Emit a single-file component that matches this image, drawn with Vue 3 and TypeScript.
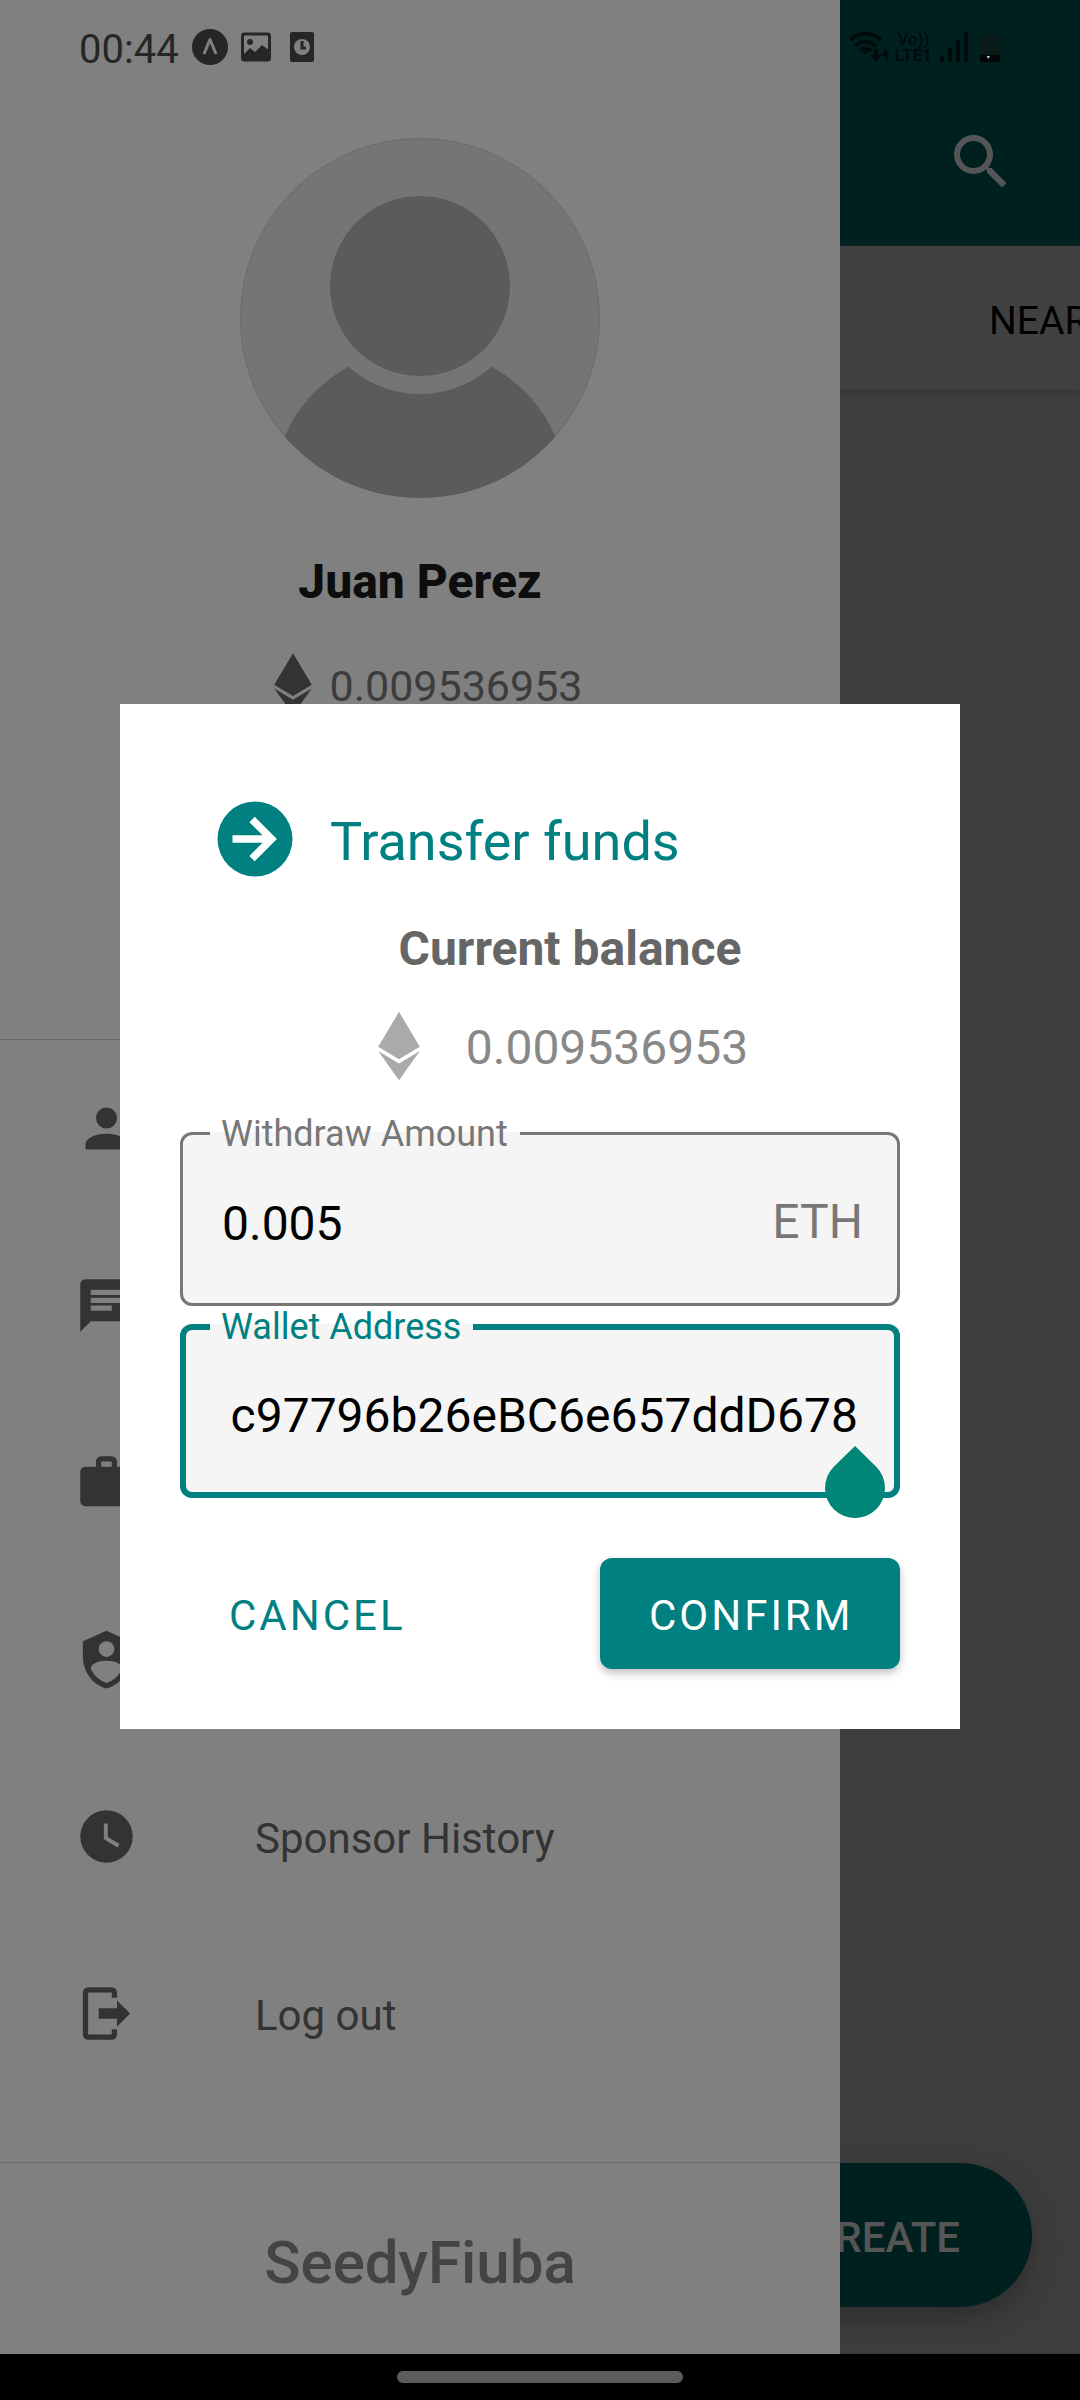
<script setup lang="ts">
import { ref } from 'vue'

interface MenuItem {
  icon: string
  path: string
  label?: string
}

const balance = '0.009536953'
const amount = ref('0.005')
const wallet = ref('c97796b26eBC6e657ddD678')

const ethereum =
  'M12,1.75L5.75,12.25L12,16L18.25,12.25L12,1.75M5.75,13.5L12,22.25L18.25,13.5L12,17.25L5.75,13.5Z'

const menu: MenuItem[] = [
  {
    icon: 'account',
    path: 'M12,4A4,4 0 0,1 16,8A4,4 0 0,1 12,12A4,4 0 0,1 8,8A4,4 0 0,1 12,4M12,14C16.42,14 20,15.79 20,18V20H4V18C4,15.79 7.58,14 12,14Z',
  },
  {
    icon: 'message',
    path: 'M20,2H4A2,2 0 0,0 2,4V22L6,18H20A2,2 0 0,0 22,16V4A2,2 0 0,0 20,2M6,6H18V8H6V6M6,9H18V11H6V9M6,12H14V14H6V12Z',
  },
  {
    icon: 'briefcase',
    path: 'M10,2H14A2,2 0 0,1 16,4V6H20A2,2 0 0,1 22,8V19A2,2 0 0,1 20,21H4C2.89,21 2,20.1 2,19V8C2,6.89 2.89,6 4,6H8V4C8,2.89 8.89,2 10,2M14,6V4H10V6H14Z',
  },
  {
    icon: 'shield',
    path: 'M12,1L3,5V11C3,16.55 6.84,21.74 12,23C17.16,21.74 21,16.55 21,11V5L12,1M12,5A3,3 0 0,1 15,8A3,3 0 0,1 12,11A3,3 0 0,1 9,8A3,3 0 0,1 12,5M17.13,17C15.92,18.85 14.11,20.24 12,20.92C9.89,20.24 8.08,18.85 6.87,17C6.53,16.5 6.24,16 6,15.47C6,13.82 8.71,12.47 12,12.47C15.29,12.47 18,13.79 18,15.47C17.76,16 17.47,16.5 17.13,17Z',
  },
  {
    icon: 'clock',
    label: 'Sponsor History',
    path: 'M12,2A10,10 0 0,0 2,12A10,10 0 0,0 12,22A10,10 0 0,0 22,12A10,10 0 0,0 12,2M16.2,16.2L11,13V7H12.5V12.2L17,14.9L16.2,16.2Z',
  },
  {
    icon: 'logout',
    label: 'Log out',
    path: 'M9,10H16V7L21,12L16,17V14H9V10M5,2H14A2,2 0 0,1 16,4V6H14V4H5V20H14V18H16V20A2,2 0 0,1 14,22H5A2,2 0 0,1 3,20V4A2,2 0 0,1 5,2Z',
  },
]
</script>

<template>
  <div class="screen">
    <div class="stage">
      <main class="home">
        <header class="topbar">
          <button class="icon-button" type="button" aria-label="Search">
            <svg viewBox="0 0 24 24" width="72" height="72">
              <path
                fill="currentColor"
                d="M9.5,3A6.5,6.5 0 0,1 16,9.5C16,11.11 15.41,12.59 14.44,13.73L14.71,14H15.5L20.5,19L19,20.5L14,15.5V14.71L13.73,14.44C12.59,15.41 11.11,16 9.5,16A6.5,6.5 0 0,1 3,9.5A6.5,6.5 0 0,1 9.5,3M9.5,5C7,5 5,7 5,9.5C5,12 7,14 9.5,14C12,14 14,12 14,9.5C14,7 12,5 9.5,5Z"
              />
            </svg>
          </button>
        </header>
        <nav class="tabs"><button class="tab" type="button">NEAR</button></nav>
        <div class="feed">
          <button class="fab" type="button">CREATE</button>
        </div>
      </main>

      <aside class="drawer">
        <section class="profile">
          <svg class="avatar" viewBox="0 0 360 360" width="360" height="360">
            <defs>
              <clipPath id="avatar-clip"><circle cx="180" cy="180" r="180" /></clipPath>
            </defs>
            <g clip-path="url(#avatar-clip)">
              <rect width="360" height="360" fill="#757575" />
              <circle cx="180" cy="358" r="148" fill="#5a5b5c" />
              <circle cx="180" cy="148" r="108" fill="#757575" />
              <circle cx="180" cy="148" r="90" fill="#5a5b5c" />
            </g>
            <circle cx="180" cy="180" r="179.5" fill="none" stroke="#555" stroke-opacity="0.3" />
          </svg>
          <h2 class="name">Juan Perez</h2>
          <p class="funds">
            <svg viewBox="0 0 24 24" width="72" height="72"><path fill="#333" :d="ethereum" /></svg>
            <span>{{ balance }}</span>
          </p>
        </section>
        <nav class="menu">
          <a v-for="item in menu" :key="item.icon" class="item" href="#">
            <svg viewBox="0 0 24 24" width="63" height="63">
              <path fill="currentColor" fill-rule="evenodd" :d="item.path" />
            </svg>
            <span v-if="item.label">{{ item.label }}</span>
          </a>
        </nav>
        <footer class="brand">SeedyFiuba</footer>
      </aside>

      <div class="status">
        <span class="clock">00:44</span>
        <svg class="notices" viewBox="0 0 122 36" width="122" height="36">
          <circle cx="18" cy="18" r="18" fill="#262626" />
          <path d="M12 25 18 10.500 24 25" fill="none" stroke="#808080" stroke-width="3" stroke-linejoin="round" />
          <rect x="50.500" y="5" width="27" height="26" rx="2" fill="none" stroke="#262626" stroke-width="3" />
          <circle cx="58" cy="13" r="3" fill="#262626" />
          <path d="M51 26 58 19 63 23 70 16 78 22V31H51Z" fill="#262626" />
          <rect x="98" y="3" width="24" height="30" rx="2" fill="#262626" />
          <circle cx="110" cy="18" r="8" fill="#808080" />
          <path d="M110 12V19H114" fill="none" stroke="#262626" stroke-width="3" />
        </svg>
        <span class="spacer"></span>
        <svg viewBox="0 0 40 32" width="40" height="32">
          <g fill="none" stroke="#000c0c" stroke-width="4">
            <path d="M1 9Q16-4 32 9" />
            <path d="M6 15Q16 6 27 15" />
            <path d="M11 20Q16 15 22 20" />
          </g>
          <path d="M14 20H19L17 24ZM22 24H25V18H29V24H32L27 31ZM33 25H36V30H39V25H40L37 17 32 25Z" fill="#000c0c" />
        </svg>
        <span class="volte"><span>Vo))</span><span>LTE1</span></span>
        <svg viewBox="0 0 28 32" width="28" height="32">
          <path d="M0 25H4V31H0ZM8 17H12V31H8ZM16 9H20V31H16ZM24 1H28V31H24Z" fill="#000c0c" />
        </svg>
        <svg class="battery" viewBox="0 0 20 32" width="20" height="32">
          <path d="M6 2H14V5H18Q20 5 20 8V25H0V8Q0 5 2 5H6Z" fill="#0a1a19" />
          <path d="M0 24H20V29Q20 31 18 31H2Q0 31 0 29Z" fill="#000606" />
          <path d="M7 25H10L8 28Z" fill="#d8d8d8" />
        </svg>
      </div>

      <div class="overlay">
        <form class="dialog" role="dialog" aria-labelledby="dialog-title" @submit.prevent>
          <div class="heading">
            <svg viewBox="0 0 24 24" width="90" height="90">
              <path
                fill="#008080"
                d="M22,12A10,10 0 0,1 12,22A10,10 0 0,1 2,12A10,10 0 0,1 12,2A10,10 0 0,1 22,12M6,13H14L10.5,16.5L11.92,17.92L17.84,12L11.92,6.08L10.5,7.5L14,11H6V13Z"
              />
            </svg>
            <h1 id="dialog-title">Transfer funds</h1>
          </div>
          <h3 class="caption">Current balance</h3>
          <p class="balance">
            <svg viewBox="0 0 24 24" width="80" height="80"><path fill="#aaa" :d="ethereum" /></svg>
            <span>{{ balance }}</span>
          </p>
          <fieldset class="field">
            <legend><label for="amount">Withdraw Amount</label></legend>
            <div class="control">
              <input id="amount" v-model="amount" type="text" inputmode="decimal" />
              <span class="affix">ETH</span>
            </div>
          </fieldset>
          <fieldset class="field focused">
            <legend><label for="wallet">Wallet Address</label></legend>
            <div class="control">
              <input id="wallet" v-model="wallet" type="text" />
            </div>
            <svg class="handle" viewBox="0 0 60 72" width="60" height="72">
              <path fill="#008577" d="M30 0 51.200 20.800A30 30 0 1 1 8.800 20.800Z" />
            </svg>
          </fieldset>
          <div class="actions">
            <button class="button" type="button">CANCEL</button>
            <button class="button primary" type="submit">CONFIRM</button>
          </div>
        </form>
      </div>
    </div>
    <div class="gesture"><span class="pill"></span></div>
  </div>
</template>

<style>
body {
  background: #000;
}
</style>

<style scoped>
.screen,
.screen * {
  box-sizing: border-box;
}
.screen {
  display: flex;
  flex-direction: column;
  min-height: 100vh;
  overflow: hidden;
  font-family: Roboto, 'Liberation Sans', sans-serif;
}
.screen svg {
  display: block;
  flex: none;
}
h1,
h2,
h3,
p {
  margin: 0;
}
button {
  font-family: inherit;
  border: 0;
  background: none;
  padding: 0;
}
.stage {
  position: relative;
  flex: 1;
  display: flex;
  flex-direction: column;
}

.home {
  flex: 1;
  display: flex;
  flex-direction: column;
  background: #3d3d3d;
}
.topbar {
  display: flex;
  justify-content: flex-end;
  align-items: center;
  height: 246px;
  padding: 78px 63px 0 0;
  background: #002020;
}
.icon-button {
  color: #555557;
}
.tabs {
  display: flex;
  justify-content: flex-end;
  height: 144px;
  overflow: hidden;
  background: #404040;
  box-shadow: 0 2px 8px #333;
}
.tab {
  flex: none;
  width: 91px;
  padding-top: 6px;
  font-size: 39px;
  color: #000;
  text-align: left;
  white-space: nowrap;
}
.feed {
  flex: 1;
  display: flex;
  justify-content: flex-end;
  align-items: flex-end;
  padding: 0 48px 47px;
}
.fab {
  height: 144px;
  padding: 4px 72px 0;
  border-radius: 72px;
  background: #002020;
  box-shadow: 0 12px 24px #2f2f2f;
  color: #555;
  font-size: 42px;
  font-weight: 500;
}

.drawer {
  position: absolute;
  top: 0;
  bottom: 0;
  left: 0;
  width: calc(100% - 240px);
  display: flex;
  flex-direction: column;
  background: #808080;
}
.profile {
  display: flex;
  flex-direction: column;
  align-items: center;
  height: 1040px;
  padding-top: 138px;
  border-bottom: 1px solid #6a6a6a;
}
.name {
  margin-top: 52px;
  color: #0d0d0d;
  font-size: 48px;
  line-height: 64px;
  font-weight: 800;
}
.funds {
  display: flex;
  align-items: center;
  margin-top: 34px;
  color: #3c3c3c;
  font-size: 43px;
}
.funds span {
  padding-top: 4px;
}
.menu {
  flex: 1;
}
.item {
  display: flex;
  align-items: center;
  gap: 117px;
  height: 177px;
  padding-left: 75px;
  color: #333;
  font-size: 42px;
  text-decoration: none;
}
.item span {
  padding-top: 4px;
}
.brand {
  display: flex;
  justify-content: center;
  align-items: center;
  height: 192px;
  padding-top: 8px;
  border-top: 1px solid #6a6a6a;
  color: #444;
  font-size: 60px;
  font-weight: 500;
}

.status {
  position: absolute;
  top: 0;
  left: 0;
  right: 0;
  display: flex;
  align-items: center;
  height: 94px;
  padding: 0 80px 0 79px;
}
.clock {
  color: #262626;
  font-size: 40px;
  padding-top: 4px;
}
.notices {
  margin-left: 13px;
}
.spacer {
  flex: 1;
}
.volte {
  display: flex;
  flex-direction: column;
  align-items: center;
  margin: 0 8px 0 6px;
  color: #000c0c;
  font-size: 17px;
  line-height: 16px;
  font-weight: 700;
}
.battery {
  margin-left: 12px;
}

.overlay {
  position: absolute;
  top: 78px;
  right: 0;
  bottom: 0;
  left: 0;
  display: flex;
  flex-direction: column;
  justify-content: center;
  padding: 0 120px;
}
.dialog {
  padding: 90px 60px 60px;
  background: #fff;
}
.heading {
  display: flex;
  align-items: center;
  gap: 30px;
  padding-left: 30px;
  color: #008080;
}
.heading h1 {
  padding-top: 6px;
  font-size: 54px;
  font-weight: 400;
}
.caption {
  margin-top: 33px;
  padding-left: 60px;
  color: #666;
  font-size: 48px;
  line-height: 64px;
  font-weight: 700;
  text-align: center;
}
.balance {
  display: flex;
  justify-content: center;
  align-items: center;
  gap: 27px;
  margin: 25px 0 30px;
  padding-left: 27px;
  color: #888;
  font-size: 48px;
}
.balance span {
  padding-top: 4px;
}
.field {
  position: relative;
  min-width: 0;
  margin: 0 0 3px;
  padding: 0;
  border: 3px solid #777;
  border-radius: 12px;
  background: #f5f5f5;
}
.field legend {
  height: 36px;
  margin-left: 27px;
  padding: 0 12px 0 11px;
  color: #777;
  font-size: 36px;
  line-height: 36px;
}
.control {
  display: flex;
  align-items: center;
  height: 151px;
  padding: 0 34px 8px 39px;
}
.control input {
  flex: 1;
  min-width: 0;
  height: 64px;
  padding: 0;
  border: 0;
  outline: 0;
  background: none;
  color: #000;
  font-family: inherit;
  font-size: 48px;
}
.affix {
  padding-bottom: 4px;
  color: #777;
  font-size: 48px;
}
.focused {
  border: 6px solid #008080;
}
.focused legend {
  margin-left: 24px;
  color: #008080;
}
.focused .control {
  height: 147px;
  padding: 0 36px 6px;
}
.focused .control input {
  text-align: right;
}
.handle {
  position: absolute;
  right: 9px;
  bottom: -26px;
}
.actions {
  display: flex;
  justify-content: space-between;
  margin-top: 60px;
}
.button {
  height: 111px;
  padding: 4px 48px 0 49px;
  border-radius: 12px;
  color: #008080;
  font-size: 42px;
  letter-spacing: 3px;
}
.primary {
  width: 300px;
  background: #008080;
  box-shadow: 0 4px 8px rgba(0, 0, 0, 0.25);
  color: #fff;
}

.gesture {
  display: flex;
  justify-content: center;
  align-items: center;
  height: 46px;
  background: #000;
}
.pill {
  width: 286px;
  height: 12px;
  border-radius: 6px;
  background: #5c5c5c;
}
</style>
